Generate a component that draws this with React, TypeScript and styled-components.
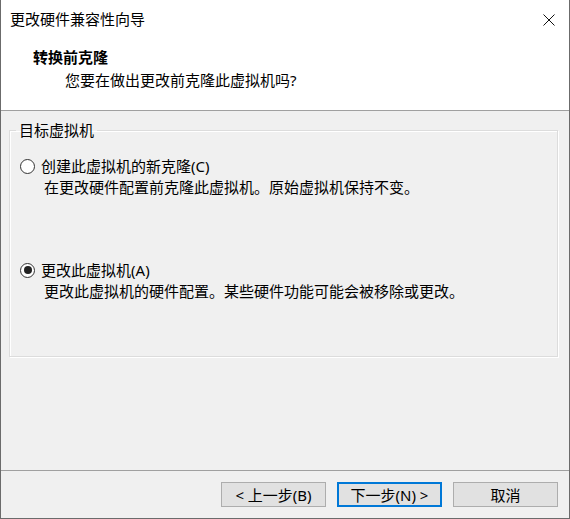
import React from 'react';
import styled, { createGlobalStyle } from 'styled-components';

const GlobalStyle = createGlobalStyle`
  html, body {
    margin: 0;
    padding: 0;
    background: #f0f0f0;
  }
  body {
    font-family: 'Noto Sans', 'Noto Sans CJK SC', sans-serif;
    font-size: 15px;
    color: #000;
  }
`;

type Option = {
  id: string;
  label: string;
  key: string;
  description: string;
  checked: boolean;
};

const options: Option[] = [
  {
    id: 'clone',
    label: '创建此虚拟机的新克隆',
    key: 'C',
    description: '在更改硬件配置前克隆此虚拟机。原始虚拟机保持不变。',
    checked: false,
  },
  {
    id: 'modify',
    label: '更改此虚拟机',
    key: 'A',
    description: '更改此虚拟机的硬件配置。某些硬件功能可能会被移除或更改。',
    checked: true,
  },
];

const App = () => {
  return (
    <>
      <GlobalStyle />
      <Window>
        <TitleBar>
          <Title>更改硬件兼容性向导</Title>
          <CloseIcon width='12' height='12' viewBox='0 0 12 12'>
            <path d='M0.5 0.5 L11.5 11.5 M11.5 0.5 L0.5 11.5' stroke='#111' strokeWidth='1' fill='none' />
          </CloseIcon>
        </TitleBar>
        <Header>
          <Heading>转换前克隆</Heading>
          <Subtitle>您要在做出更改前克隆此虚拟机吗?</Subtitle>
        </Header>
        <Body>
          <GroupBox>
            <Legend>目标虚拟机</Legend>
            <OptionList>
              {options.map((o) => (
                <OptionItem key={o.id}>
                  <RadioRow>
                    <Radio $checked={o.checked} />
                    <span>
                      {o.label}({o.key})
                    </span>
                  </RadioRow>
                  <Description>{o.description}</Description>
                </OptionItem>
              ))}
            </OptionList>
          </GroupBox>
        </Body>
        <Footer>
          <Button>&lt; 上一步(B)</Button>
          <Button $primary>下一步(N) &gt;</Button>
          <Button>取消</Button>
        </Footer>
      </Window>
    </>
  );
};

export default App;

const Window = styled.div`
  width: 570px;
  height: 519px;
  box-sizing: border-box;
  display: flex;
  flex-direction: column;
  background: #f0f0f0;
  border: 1px solid #6b6b6b;
  border-top: none;
`;

const TitleBar = styled.div`
  height: 38px;
  box-sizing: border-box;
  padding: 9px 14px 0 9px;
  display: flex;
  justify-content: space-between;
  align-items: flex-start;
  background: #fff;
`;

const Title = styled.div`
  line-height: 20px;
`;

const CloseIcon = styled.svg`
  margin-top: 5px;
`;

const Header = styled.div`
  height: 73px;
  box-sizing: border-box;
  padding: 9px 0 0 32px;
  background: #fff;
  border-bottom: 1px solid #a0a0a0;
`;

const Heading = styled.div`
  font-weight: 700;
  line-height: 20px;
`;

const Subtitle = styled.div`
  margin: 3px 0 0 32px;
  line-height: 20px;
`;

const Body = styled.div`
  flex: 1;
  padding-top: 9px;
`;

const GroupBox = styled.fieldset`
  margin: 0 11px 0 8px;
  padding: 0 6px 55px 6px;
  border: 1px solid #dcdcdc;
  box-shadow: inset 1px 1px 0 #fff, 1px 1px 0 #fff;
`;

const Legend = styled.legend`
  padding: 0 3px;
  line-height: 20px;
`;

const OptionList = styled.div`
  padding: 16px 0 0 4px;
  display: flex;
  flex-direction: column;
  gap: 63px;
`;

const OptionItem = styled.div`
  display: flex;
  flex-direction: column;
  gap: 1px;
`;

const RadioRow = styled.div`
  display: flex;
  align-items: center;
  gap: 6px;
  line-height: 20px;
`;

const Radio = styled.span<{ $checked?: boolean }>`
  width: 15px;
  height: 15px;
  box-sizing: border-box;
  border: 1px solid #333;
  border-radius: 50%;
  background: #fff;
  display: flex;
  align-items: center;
  justify-content: center;

  &::after {
    content: '';
    display: ${(p) => (p.$checked ? 'block' : 'none')};
    width: 8px;
    height: 8px;
    border-radius: 50%;
    background: #222;
  }
`;

const Description = styled.div`
  padding-left: 24px;
  line-height: 20px;
`;

const Footer = styled.div`
  border-top: 1px solid #a0a0a0;
  padding: 11px 11px 11px 0;
  display: flex;
  justify-content: flex-end;
  gap: 11px;
`;

const Button = styled.button<{ $primary?: boolean }>`
  width: 105px;
  height: 25px;
  box-sizing: border-box;
  padding: 0;
  font-family: inherit;
  font-size: 15px;
  line-height: 20px;
  color: #000;
  background: #e1e1e1;
  border: ${(p) => (p.$primary ? '2px solid #0078d7' : '1px solid #adadad')};
`;
